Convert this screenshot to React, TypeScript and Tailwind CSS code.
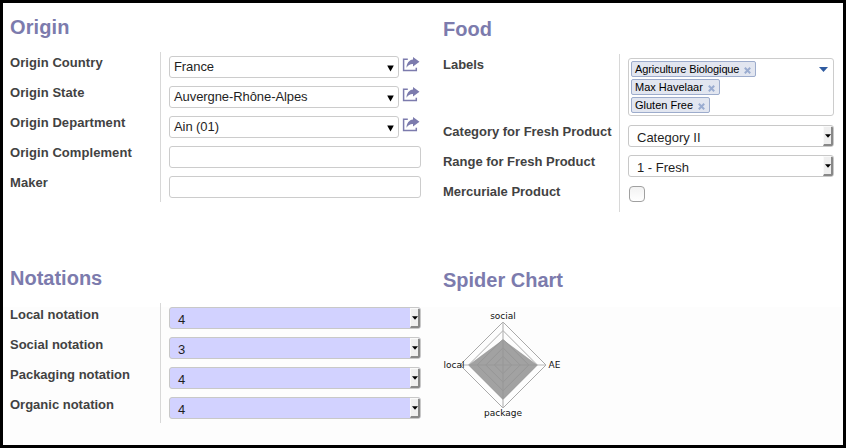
import type { ReactNode } from "react";

function Heading({ children, className }: { children: ReactNode; className: string }) {
  return (
    <h2 className={`text-[20px] leading-6 font-bold whitespace-nowrap text-[#7c7bad] ${className}`}>
      {children}
    </h2>
  );
}

function Row({
  label,
  labelClass,
  height = "h-[30px]",
  children,
}: {
  label: string;
  labelClass: string;
  height?: string;
  children: ReactNode;
}) {
  return (
    <div className={`flex ${height}`}>
      <div
        className={`${labelClass} shrink-0 border-r border-[#d8d8d8] text-[13px] font-bold whitespace-nowrap text-[#424242]`}
      >
        {label}
      </div>
      <div className="flex items-start pt-1 pl-2">{children}</div>
    </div>
  );
}

const originLabel = "w-[151px] leading-[21px] tracking-[0.07px]";
const notationLabel = "w-[151px] leading-[23px]";
const foodLabel = "w-[177px] leading-[21px] tracking-[-0.02px]";

function ShareIcon() {
  return (
    <svg width="18" height="16" viewBox="0 0 18 16" className="mt-px ml-[3px]">
      <path d="M5.8 2.2H1.6V13.4H14.3V10.8" fill="none" stroke="#7c7bad" strokeWidth="1.5" />
      <path d="M11 0L17.5 4.8L11 9.6V7.1C8 7 6.3 8.2 4.5 10.8C4.7 6.3 7 3.1 11 2.6Z" fill="#7c7bad" />
    </svg>
  );
}

function ComboBox({ value }: { value: string }) {
  return (
    <>
      <div className="flex h-[22px] w-[230px] items-center justify-between rounded-[3px] border border-[#cccccc] bg-white pr-[4px] pl-1 text-[13px] leading-5 tracking-[-0.08px] text-[#1f1f1f]">
        <span>{value}</span>
        <svg width="7" height="7" viewBox="0 0 7 7" className="mt-[2px]">
          <path d="M0.2 0.5H6.8L3.5 6.5Z" fill="#000" />
        </svg>
      </div>
      <ShareIcon />
    </>
  );
}

function TextBox() {
  return <div className="h-[22px] w-[252px] rounded-[3px] border border-[#cccccc] bg-white" />;
}

function NativeSelect({ value, filled = false }: { value: string; filled?: boolean }) {
  return (
    <div
      className={`flex h-[22px] justify-between overflow-hidden rounded-[3px] border border-[#c8c8c8] pl-2 text-[13px] leading-5 text-[#1f1f1f] ${
        filled ? "w-[252px] bg-[#d2d2ff]" : "w-[206px] bg-white"
      }`}
    >
      <span className="pt-[2px]">{value}</span>
      <span className="flex h-5 w-[10px] items-center justify-center border-t border-r-2 border-b-2 border-l border-t-[#fafafa] border-r-[#888888] border-b-[#888888] border-l-[#fafafa] bg-[#efefef]">
        <svg width="6" height="4" viewBox="0 0 6 4" className="shrink-0">
          <path d="M0 0.3H6L3 3.7Z" fill="#000" />
        </svg>
      </span>
    </div>
  );
}

function Tag({ children, className = "" }: { children: ReactNode; className?: string }) {
  return (
    <span
      className={`flex h-4 items-center rounded-[2px] border border-[#9daccc] bg-[#e2e6f0] pr-1 pl-[3px] text-[11px] leading-[14px] text-black ${className}`}
    >
      {children}
      <svg width="7" height="7" viewBox="0 0 7 7" className="mt-[2px] ml-[5px]">
        <path d="M0.8 0.8L6.2 6.2M6.2 0.8L0.8 6.2" stroke="#9aacd0" strokeWidth="2" />
      </svg>
    </span>
  );
}

const rings = [8.6, 17.2, 25.8, 34.4, 43];

function SpiderChart() {
  return (
    <svg
      width="130"
      height="116"
      viewBox="0 0 130 116"
      fontFamily="'DejaVu Sans', sans-serif"
      fontSize="9"
      fill="#111"
    >
      {rings.map((r) => (
        <path
          key={r}
          d={`M60 ${57 - r}L${60 + r} 57L60 ${57 + r}L${60 - r} 57Z`}
          fill="none"
          stroke="#aaaaaa"
          strokeWidth="1"
        />
      ))}
      <path d="M60 14V100M17 57H103" stroke="#b8b8b8" strokeWidth="1.2" />
      <path d="M60 31.5L94.4 57L60 91.4L25.6 57Z" fill="#929292" fillOpacity="0.85" />
      <text x="60" y="11" textAnchor="middle">social</text>
      <text x="105.5" y="60">AE</text>
      <text x="0.5" y="60">local</text>
      <text x="60" y="108" textAnchor="middle">package</text>
    </svg>
  );
}

export default function App() {
  return (
    <main className="flex h-[448px] w-[846px] overflow-hidden border-[3px] border-black bg-[linear-gradient(#ffffff_304px,#fdfdfd_304px)] pl-[7px] font-['Liberation_Sans',Arial,sans-serif]">
      <div className="w-[433px] shrink-0">
        <section className="h-[251px]">
          <Heading className="h-[49px] pt-3 tracking-[0.1px]">Origin</Heading>
          <Row label="Origin Country" labelClass={originLabel}><ComboBox value="France" /></Row>
          <Row label="Origin State" labelClass={originLabel}><ComboBox value="Auvergne-Rhône-Alpes" /></Row>
          <Row label="Origin Department" labelClass={originLabel}><ComboBox value="Ain (01)" /></Row>
          <Row label="Origin Complement" labelClass={originLabel}><TextBox /></Row>
          <Row label="Maker" labelClass={originLabel}><TextBox /></Row>
        </section>
        <section>
          <Heading className="h-[49px] pt-3">Notations</Heading>
          <Row label="Local notation" labelClass={notationLabel}><NativeSelect value="4" filled /></Row>
          <Row label="Social notation" labelClass={notationLabel}><NativeSelect value="3" filled /></Row>
          <Row label="Packaging notation" labelClass={notationLabel}><NativeSelect value="4" filled /></Row>
          <Row label="Organic notation" labelClass={notationLabel}><NativeSelect value="4" filled /></Row>
        </section>
      </div>
      <div>
        <section className="h-[251px]">
          <Heading className="h-[51px] pt-[14px]">Food</Heading>
          <Row label="Labels" labelClass={foodLabel} height="h-[67px]">
            <div className="flex h-[58px] w-[206px] items-start justify-between rounded-[3px] border border-[#cccccc] bg-white pt-[2px] pr-[5px] pl-[2px]">
              <div className="flex flex-col items-start gap-[2px]">
                <Tag className="tracking-[-0.12px]">Agriculture Biologique</Tag>
                <Tag>Max Havelaar</Tag>
                <Tag>Gluten Free</Tag>
              </div>
              <svg width="9" height="5" viewBox="0 0 9 5" className="mt-[6px]">
                <path d="M0 0H9L4.5 5Z" fill="#2f5ba0" />
              </svg>
            </div>
          </Row>
          <Row label="Category for Fresh Product" labelClass={foodLabel}><NativeSelect value="Category II" /></Row>
          <Row label="Range for Fresh Product" labelClass={foodLabel}><NativeSelect value="1 - Fresh" /></Row>
          <Row label="Mercuriale Product" labelClass={foodLabel} height="h-[31px]">
            <span className="mt-px ml-px h-4 w-4 rounded-[4px] border border-[#a0a0a0] bg-linear-to-b from-[#f2f2f2] to-white" />
          </Row>
        </section>
        <section>
          <Heading className="h-[54px] pt-[14px]">Spider Chart</Heading>
          <SpiderChart />
        </section>
      </div>
    </main>
  );
}
